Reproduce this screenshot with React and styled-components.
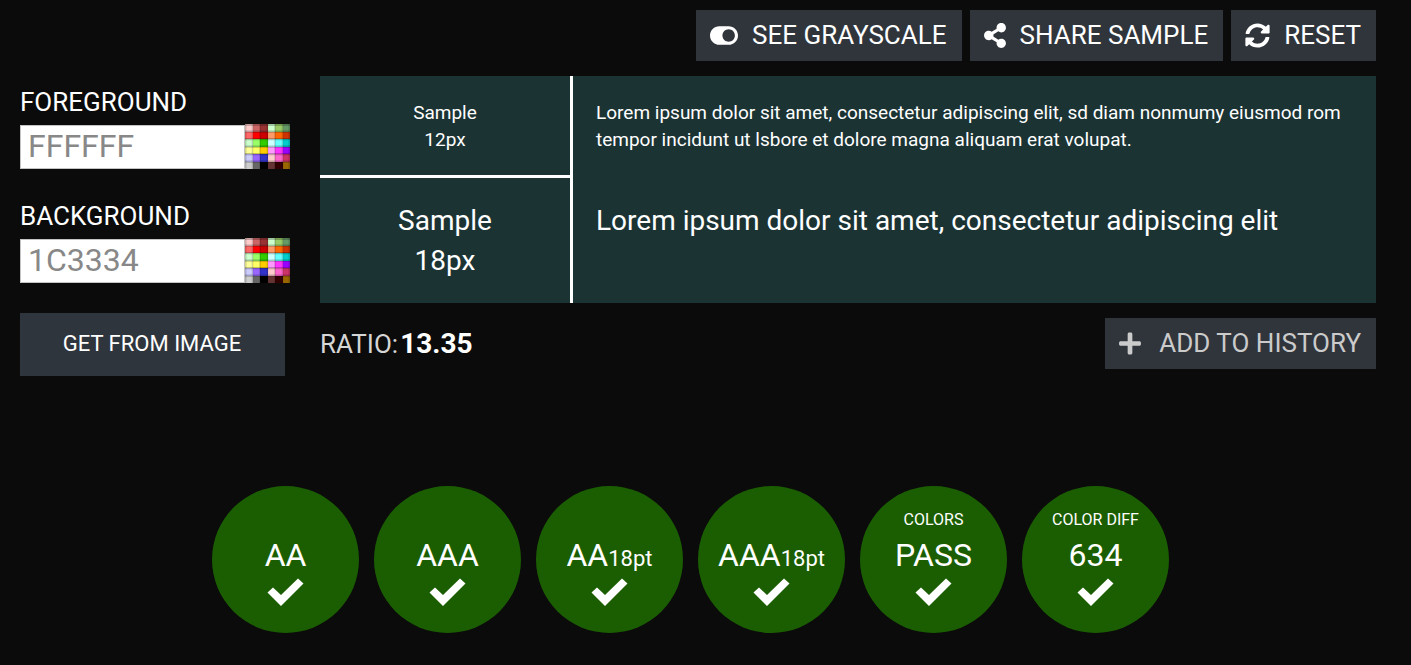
import React from 'react';
import styled, { createGlobalStyle } from 'styled-components';
import { FaToggleOn, FaShareAlt, FaSyncAlt, FaPlus } from 'react-icons/fa';

const GlobalStyle = createGlobalStyle`
  *, *::before, *::after { box-sizing: border-box; }
  body {
    margin: 0;
    background: #0b0b0b;
    color: #fff;
    font-family: Roboto, 'Liberation Sans', sans-serif;
  }
  p, ul { margin: 0; padding: 0; }
`;

const Page = styled.main`
  padding: 10px 35px 32px 20px;
`;

const Toolbar = styled.div`
  display: flex;
  justify-content: flex-end;
  gap: 8px;
  margin-bottom: 15px;
`;

const Button = styled.button`
  display: inline-flex;
  align-items: center;
  gap: ${(p) => (p.$muted ? '18px' : '14px')};
  height: 51px;
  padding: 0 15px 1px 14px;
  border: 0;
  background: #30353c;
  color: ${(p) => (p.$muted ? '#cbcbcb' : '#fff')};
  font-family: inherit;
  font-size: 26px;
  line-height: 30px;
  cursor: pointer;
  svg {
    flex: none;
    width: ${(p) => p.$icon || 25}px;
    height: 25px;
  }
`;

const ImageButton = styled(Button)`
  justify-content: center;
  width: 265px;
  height: 63px;
  background: #2f353d;
  font-size: 22px;
`;

const Columns = styled.div`
  display: grid;
  grid-template-columns: 270px minmax(0, 1fr);
  column-gap: 30px;
  align-items: start;
`;

const Fields = styled.form`
  display: flex;
  flex-direction: column;
  gap: 30px;
  padding-top: 9px;
`;

const Field = styled.div`
  display: flex;
  flex-direction: column;
  gap: 5px;
`;

const FieldLabel = styled.label`
  font-size: 26px;
  line-height: 34px;
`;

const FieldRow = styled.div`
  display: flex;
  align-items: flex-end;
`;

const HexInput = styled.input`
  flex: 1;
  min-width: 0;
  height: 44px;
  padding: 0 7px 2px;
  border: 1px solid #c4c4c4;
  border-radius: 0;
  background: #fff;
  color: #888;
  font-family: inherit;
  font-size: 32px;
`;

const PaletteButton = styled.button`
  flex: none;
  width: 45px;
  height: 45px;
  padding: 0;
  border: 0;
  background: none;
  cursor: pointer;
  svg { display: block; }
`;

const Preview = styled.div`
  display: grid;
  grid-template-columns: 253px minmax(0, 1fr);
  background: #1c3334;
`;

const SampleName = styled.div`
  padding: 23px 0 22px;
  border-right: 3px solid #fff;
  border-bottom: ${(p) => (p.$large ? '0' : '3px solid #fff')};
  text-align: center;
  font-size: ${(p) => (p.$large ? '28px' : '19px')};
  line-height: ${(p) => (p.$large ? '40px' : '27px')};
`;

const SampleText = styled.p`
  padding: 23px 23px 22px;
  font-size: ${(p) => (p.$large ? '28px' : '19px')};
  line-height: ${(p) => (p.$large ? '40px' : '27px')};
`;

const ResultRow = styled.div`
  display: flex;
  justify-content: space-between;
  align-items: center;
  margin-top: 15px;
`;

const Ratio = styled.p`
  display: flex;
  gap: 2px;
  color: #d6d6d6;
  font-size: 26px;
  line-height: 34px;
  strong { color: #fff; font-size: 28px; }
`;

const Badges = styled.ul`
  display: flex;
  flex-wrap: wrap;
  justify-content: center;
  gap: 15px;
  margin: 110px 0 0;
  padding-right: 15px;
  list-style: none;
`;

const Badge = styled.li`
  display: flex;
  flex-direction: column;
  align-items: center;
  width: 147px;
  height: 147px;
  padding-top: 24px;
  border-radius: 50%;
  background: #1b5e02;
`;

const BadgeCaption = styled.span`
  height: 20px;
  font-size: 16px;
  line-height: 20px;
`;

const BadgeValue = styled.span`
  height: 40px;
  margin: 5px 0 3px;
  font-size: 32px;
  line-height: 40px;
  white-space: nowrap;
  small { font-size: 22px; }
`;

const paletteRows = [
  ['#ffcccc', '#cc6666', '#993333', '#ccffcc', '#99cc66', '#669966'],
  ['#ff6666', '#ff0000', '#cc0000', '#ff9966', '#ff6600', '#cc3300'],
  ['#ccffcc', '#99ff66', '#33cc00', '#ccffff', '#66ffff', '#00cccc'],
  ['#ffff99', '#ffff66', '#ffcc00', '#ff99ff', '#ff33ff', '#9900ff'],
  ['#ccccff', '#9966ff', '#3333cc', '#ffcccc', '#ff66cc', '#cc3366'],
  ['#cccccc', '#666666', '#000000', '#663333', '#330000', '#996600'],
];

function Palette() {
  return (
    <svg width="45" height="45" viewBox="0 0 60 60" aria-hidden="true">
      <g shapeRendering="crispEdges">
        {paletteRows.map((row, y) =>
          row.map((fill, x) => (
            <rect key={`${x}-${y}`} x={x * 10} y={y * 10} width="10" height="10" fill={fill} />
          ))
        )}
      </g>
      <path
        d="M1 0V60M10 0V60M20 0V60M30 0V60M40 0V60M50 0V60M59 0V60"
        stroke="#000"
        strokeWidth="2"
        opacity=".16"
      />
      <path
        d="M0 1H60M0 10H60M0 20H60M0 30H60M0 40H60M0 50H60"
        stroke="#000"
        strokeWidth="3"
        opacity=".22"
      />
    </svg>
  );
}

function Check() {
  return (
    <svg width="37" height="29" viewBox="0 0 37 29" aria-hidden="true">
      <path d="M.5 14.500 6 9.500 14 17 31 .500 36.500 5.500 14 28Z" fill="#fff" />
    </svg>
  );
}

function HexField({ id, label, value }) {
  return (
    <Field>
      <FieldLabel htmlFor={id}>{label}</FieldLabel>
      <FieldRow>
        <HexInput id={id} defaultValue={value} />
        <PaletteButton type="button" aria-label={`Pick ${label.toLowerCase()} color`}>
          <Palette />
        </PaletteButton>
      </FieldRow>
    </Field>
  );
}

const badges = [
  { value: 'AA' },
  { value: 'AAA' },
  { value: 'AA', size: '18pt' },
  { value: 'AAA', size: '18pt' },
  { caption: 'COLORS', value: 'PASS' },
  { caption: 'COLOR DIFF', value: '634' },
];

export default function App() {
  return (
    <>
      <GlobalStyle />
      <Page>
        <Toolbar>
          <Button type="button" $icon={28}><FaToggleOn />SEE GRAYSCALE</Button>
          <Button type="button" $icon={22}><FaShareAlt />SHARE SAMPLE</Button>
          <Button type="button"><FaSyncAlt />RESET</Button>
        </Toolbar>
        <Columns>
          <Fields>
            <HexField id="foreground" label="FOREGROUND" value="FFFFFF" />
            <HexField id="background" label="BACKGROUND" value="1C3334" />
            <ImageButton type="button">GET FROM IMAGE</ImageButton>
          </Fields>
          <section>
            <Preview>
              <SampleName>Sample<br />12px</SampleName>
              <SampleText>
                Lorem ipsum dolor sit amet, consectetur adipiscing elit, sd diam nonmumy eiusmod rom
                tempor incidunt ut lsbore et dolore magna aliquam erat volupat.
              </SampleText>
              <SampleName $large>Sample<br />18px</SampleName>
              <SampleText $large>Lorem ipsum dolor sit amet, consectetur adipiscing elit</SampleText>
            </Preview>
            <ResultRow>
              <Ratio>RATIO: <strong>13.35</strong></Ratio>
              <Button type="button" $muted $icon={22}><FaPlus />ADD TO HISTORY</Button>
            </ResultRow>
          </section>
        </Columns>
        <Badges>
          {badges.map((b) => (
            <Badge key={`${b.value}${b.size || ''}`}>
              <BadgeCaption>{b.caption}</BadgeCaption>
              <BadgeValue>{b.value}{b.size && <small>{b.size}</small>}</BadgeValue>
              <Check />
            </Badge>
          ))}
        </Badges>
      </Page>
    </>
  );
}
